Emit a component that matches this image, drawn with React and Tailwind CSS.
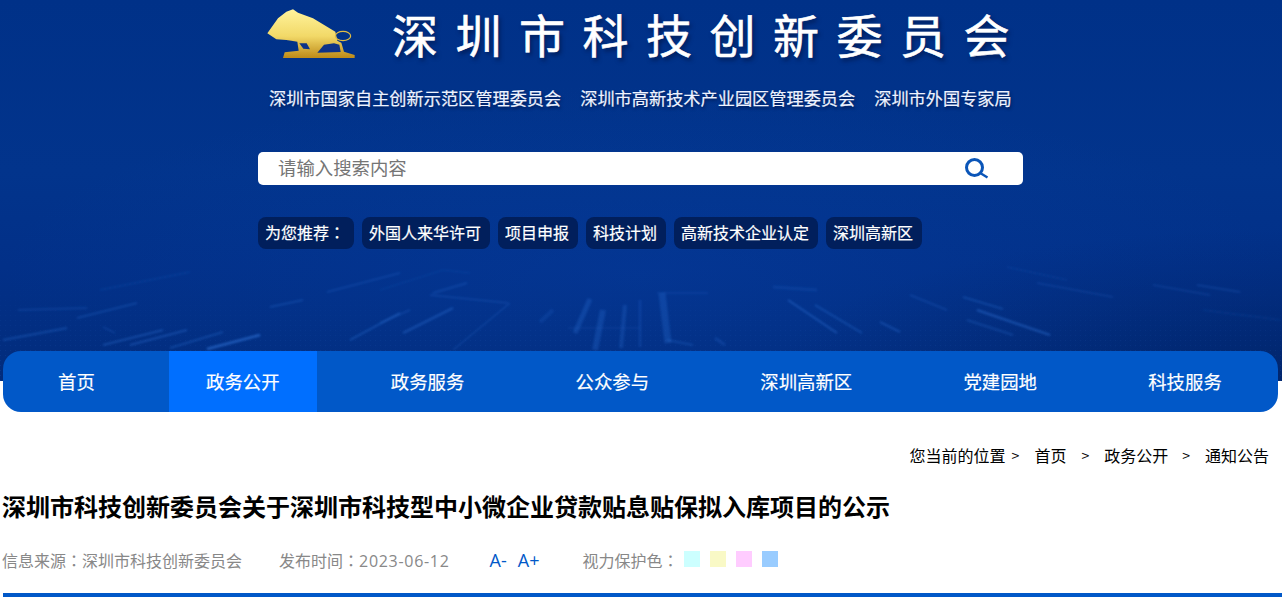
// ── 深圳市科技创新委员会: header, nav, article head ───
const CJK = "font-['Noto_Sans_CJK_SC',sans-serif]";
const COLON = "font-['Noto_Sans_CJK_TC',sans-serif]";
const LATIN = "font-['Open_Sans',sans-serif]";

const TAGS = ["外国人来华许可", "项目申报", "科技计划", "高新技术企业认定", "深圳高新区"];
const NAV = ["首页", "政务公开", "政务服务", "公众参与", "深圳高新区", "党建园地", "科技服务"];
const CRUMBS = ["首页", "政务公开", "通知公告"];
const SWATCHES = ["bg-[#ccffff]", "bg-[#f9f9c6]", "bg-[#ffccff]", "bg-[#99ccff]"];

// ── Streaks in the header picture (x1, y1, x2, y2, width, opacity) ─
const STREAKS = [
  [18, 310, 87, 308, 1.5, 0.2], [77, 318, 137, 303, 1.5, 0.25], [103, 327, 115, 333, 1, 0.3], [3, 340, 67, 328, 2, 0.25],
  [103, 345, 163, 330, 1.5, 0.35], [130, 345, 187, 330, 1.5, 0.35], [170, 348, 223, 332, 1.5, 0.3], [207, 349, 260, 335, 2.5, 0.45],
  [350, 340, 400, 313, 1.5, 0.3], [270, 307, 303, 300, 1.5, 0.25], [327, 292, 400, 273, 1.5, 0.2], [100, 290, 190, 272, 1.5, 0.12],
  [380, 323, 410, 310, 1.5, 0.2], [403, 333, 453, 308, 2.5, 0.28], [453, 350, 510, 303, 1, 0.3], [430, 295, 508, 303, 1, 0.28],
  [433, 293, 467, 283, 2, 0.18], [380, 290, 443, 270, 1, 0.14], [443, 270, 470, 273, 1, 0.14],
  [575, 333, 590, 299, 5, 0.2], [540, 322, 553, 310, 4, 0.12], [595, 350, 603, 310, 6, 0.2], [621, 348, 625, 305, 4, 0.18],
  [640, 300, 640, 347, 2.5, 0.16], [662, 293, 668, 343, 7, 0.2], [657, 293, 708, 293, 1, 0.22], [667, 340, 693, 345, 2, 0.2],
  [715, 338, 725, 345, 3, 0.16], [568, 328, 640, 328, 1, 0.15], [788, 300, 837, 333, 2, 0.3], [815, 305, 862, 333, 2, 0.25],
  [773, 287, 817, 290, 3, 0.12], [880, 322, 900, 332, 2, 0.25], [910, 295, 947, 310, 1.5, 0.2], [963, 297, 1003, 309, 1.5, 0.28],
  [977, 310, 1050, 335, 2, 0.35], [967, 320, 1013, 335, 2, 0.2], [1007, 267, 1067, 280, 1.5, 0.1], [1037, 283, 1113, 297, 1.5, 0.16],
  [1153, 285, 1210, 295, 1.5, 0.16], [1197, 285, 1240, 292, 1.5, 0.2], [1203, 310, 1280, 320, 1.5, 0.1],
];

const HeaderArt = () => (
  <svg className="absolute inset-0 w-full h-full" viewBox="0 0 1282 381" preserveAspectRatio="none">
    <defs>
      <radialGradient id="glow" cx="0.5" cy="0.72" r="0.5">
        <stop offset="0" stopColor="#0a4ab8" stopOpacity="0.22" />
        <stop offset="1" stopColor="#0a4ab8" stopOpacity="0" />
      </radialGradient>
      <radialGradient id="cornerR" cx="1" cy="1" r="0.4">
        <stop offset="0" stopColor="#00205f" stopOpacity="0.5" />
        <stop offset="1" stopColor="#00205f" stopOpacity="0" />
      </radialGradient>
      <pattern id="dots" width="5" height="5" patternUnits="userSpaceOnUse">
        <rect width="1" height="1" fill="#4a90f0" />
      </pattern>
      <linearGradient id="dotfade" x1="0" y1="0" x2="0" y2="1">
        <stop offset="0" stopColor="white" stopOpacity="0" />
        <stop offset="1" stopColor="white" stopOpacity="1" />
      </linearGradient>
      <mask id="dotmask"><rect y="280" width="1282" height="101" fill="url(#dotfade)" /></mask>
      <filter id="soft" x="-20%" y="-20%" width="140%" height="140%">
        <feGaussianBlur stdDeviation="1" />
      </filter>
    </defs>
    <rect width="1282" height="381" fill="url(#glow)" />
    <rect width="1282" height="381" fill="url(#cornerR)" />
    <rect y="280" width="1282" height="101" fill="url(#dots)" opacity="0.12" mask="url(#dotmask)" />
    <g filter="url(#soft)" stroke="#3f8cf5" strokeLinecap="butt">
      {STREAKS.map(([x1, y1, x2, y2, w, o], i) => (
        <line key={i} x1={x1} y1={y1} x2={x2} y2={y2} strokeWidth={w} opacity={o} />
      ))}
    </g>
  </svg>
);

// gold bull logo
const Bull = () => (
  <svg width="110" height="70" viewBox="0 0 330 210" className="shrink-0">
    <defs>
      <linearGradient id="gold" x1="0" y1="0" x2="0" y2="1">
        <stop offset="0" stopColor="#fff39c" />
        <stop offset="0.55" stopColor="#f2d968" />
        <stop offset="1" stopColor="#bd8a18" />
      </linearGradient>
      <filter id="bullsoft"><feGaussianBlur stdDeviation="1.5" /></filter>
    </defs>
    <g filter="url(#bullsoft)">
      <path d="M28 100 L60 55 L85 35 L105 28 L120 38 L165 55 L232 95 L238 122 L250 128 L258 155 L290 165 L290 174 L75 174 L80 157 L122 152 L118 125 L100 122 L85 120 L55 118 Z" fill="url(#gold)" />
      <ellipse cx="255" cy="108" rx="23" ry="14" fill="none" stroke="#e0bc44" strokeWidth="3.5" />
      <path d="M178 158 L198 134 L228 130 L244 134 L248 156 Z" fill="#0a3288" />
      <path d="M124 130 L146 130 L156 148 L136 146 Z" fill="#0a3288" />
    </g>
  </svg>
);

const SearchIcon = () => (
  <svg width="24" height="21" viewBox="0 0 24 21" fill="none" stroke="#0a55b8">
    <circle cx="9.5" cy="9.5" r="8" strokeWidth="3" />
    <path d="M16 15.5 L22.5 19.5" strokeWidth="2.4" />
  </svg>
);

const Header = () => (
  <header className="relative h-[381px] overflow-hidden bg-[linear-gradient(180deg,#003188_0%,#02348c_45%,#023088_70%,#022c7c_100%)]">
    <HeaderArt />
    <div className="relative w-[765px] ml-[258px] flex flex-col">
      <div className="h-[74px] flex items-start">
        <Bull />
        <h1 className="ml-[24px] mt-[5px] text-[46px] leading-[56px] tracking-[17.5px] whitespace-nowrap text-white font-normal [-webkit-text-stroke:0.6px_white] [text-shadow:2px_3px_4px_rgba(0,20,70,0.75)]">
          深圳市科技创新委员会
        </h1>
      </div>
      <div className="h-[78px] pt-[11px] pl-[11px] flex gap-[19px] text-[17.2px] leading-[26px] text-[#eef3ff] whitespace-nowrap [-webkit-text-stroke:0.2px_#eef3ff] [text-shadow:1px_2px_3px_rgba(0,20,70,0.8)]">
        <span>深圳市国家自主创新示范区管理委员会</span>
        <span>深圳市高新技术产业园区管理委员会</span>
        <span>深圳市外国专家局</span>
      </div>
      <div className="h-[33px] bg-white rounded-[5px] flex items-center justify-between pl-[20px] pr-[34px]">
        <span className="text-[18.4px] leading-[30px] mt-[-4px] text-[#757575]">请输入搜索内容</span>
        <SearchIcon />
      </div>
      <div className="mt-[32px] flex gap-[8px] [-webkit-text-stroke:0.2px_white]">
        <span className="h-[32px] pl-[7px] pr-[9px] rounded-[8px] bg-[#011f5c] text-white text-[16px] leading-[31px]">为您推荐<span className={COLON}>：</span></span>
        {TAGS.map((t) => (
          <a key={t} href="#" className="h-[32px] pl-[7px] pr-[9px] rounded-[8px] bg-[#011f5c] text-white text-[16px] leading-[31px]">{t}</a>
        ))}
      </div>
    </div>
  </header>
);

const Nav = () => (
  <nav className="relative mt-[-30px] mx-[3px] w-[1275px] h-[61px] rounded-[18px] bg-[#0158c8] flex gap-[37.2px] pl-[18px] overflow-hidden">
    {NAV.map((n, i) => (
      <a key={n} href="#" className={`px-[37px] text-[18.4px] leading-[60px] text-white whitespace-nowrap [-webkit-text-stroke:0.2px_white] ${i === 1 ? "bg-[#006fff]" : ""}`}>{n}</a>
    ))}
  </nav>
);

const Breadcrumb = () => (
  <div className="mt-[32px] h-[22px] pr-[13px] flex justify-end items-center text-[16px] text-black whitespace-nowrap">
    <span>您当前的位置</span>
    <span className="ml-[6px] text-[14px]">&gt;</span>
    {CRUMBS.map((c, i) => (
      <span key={c} className="flex items-center">
        {i > 0 && <span className={`text-[14px] ${i === 1 ? "ml-[15px]" : "ml-[14px]"}`}>&gt;</span>}
        <span className="ml-[15px]">{c}</span>
      </span>
    ))}
  </div>
);

const ArticleHead = () => (
  <section className="pl-[2px]">
    <h2 className="mt-[22px] text-[24px] leading-[36px] font-bold text-black whitespace-nowrap">
      深圳市科技创新委员会关于深圳市科技型中小微企业贷款贴息贴保拟入库项目的公示
    </h2>
    <div className="mt-[24px] h-[24px] flex items-center text-[16px] text-[#888888] whitespace-nowrap">
      <span>信息来源<span className={COLON}>：</span>深圳市科技创新委员会</span>
      <span className="ml-[37px]">发布时间<span className={COLON}>：</span><span className={`${LATIN} tracking-[0.7px]`}>2023-06-12</span></span>
      <a href="#" className={`${LATIN} ml-[40px] text-[18px] leading-[24px] text-[#0158c8]`}>A-</a>
      <a href="#" className={`${LATIN} ml-[11px] text-[18px] leading-[24px] text-[#0158c8]`}>A+</a>
      <span className="ml-[43px]">视力保护色<span className={COLON}>：</span></span>
      <div className="flex gap-[10px] ml-[6px] mt-[-2px]">
        {SWATCHES.map((s) => <span key={s} className={`w-[16px] h-[16px] ${s}`} />)}
      </div>
    </div>
    <div className="mt-[21px] ml-[1px] h-[4px] bg-[#0158c8]" />
  </section>
);

export default function App() {
  return (
    <div className={`w-[1282px] h-[597px] overflow-hidden bg-white ${CJK}`}>
      <Header />
      <Nav />
      <Breadcrumb />
      <ArticleHead />
    </div>
  );
}
